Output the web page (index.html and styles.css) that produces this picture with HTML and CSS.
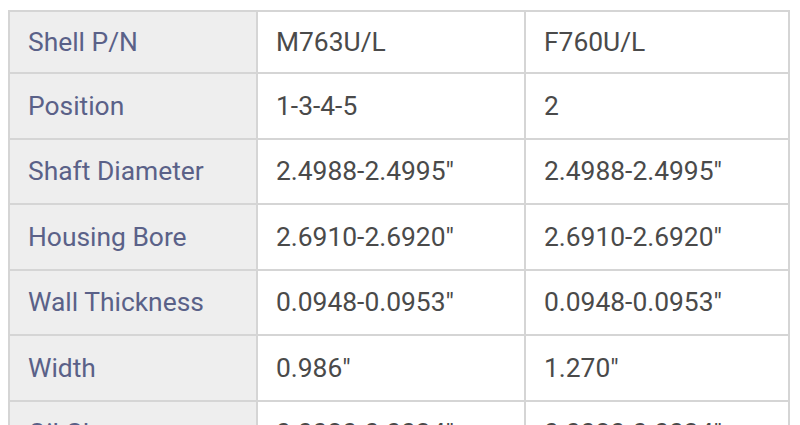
FILE: index.html
```html
<!DOCTYPE html>
<html>
<head>
<meta charset="utf-8">
<link rel="stylesheet" href="styles.css">
</head>
<body>
<table class="spec">
  <colgroup><col class="c1"><col class="c2"><col class="c3"></colgroup>
  <tr><th>Shell P/N</th><td>M763U/L</td><td>F760U/L</td></tr>
  <tr><th>Position</th><td>1-3-4-5</td><td>2</td></tr>
  <tr><th>Shaft Diameter</th><td>2.4988-2.4995"</td><td>2.4988-2.4995"</td></tr>
  <tr><th>Housing Bore</th><td>2.6910-2.6920"</td><td>2.6910-2.6920"</td></tr>
  <tr><th>Wall Thickness</th><td>0.0948-0.0953"</td><td>0.0948-0.0953"</td></tr>
  <tr><th>Width</th><td>0.986"</td><td>1.270"</td></tr>
  <tr><th>Oil Clearance</th><td>0.0020-0.0034"</td><td>0.0020-0.0034"</td></tr>
</table>
</body>
</html>
```
FILE: styles.css
```css
html, body { margin: 0; padding: 0; background: #fff; overflow: hidden; }
body { padding: 10px 0 0 8px; font-family: Roboto, "Liberation Sans", sans-serif; }
.spec { border-collapse: collapse; table-layout: fixed; width: 780px; }
.c1 { width: 248px; }
.c2 { width: 268px; }
.c3 { width: 264px; }
.spec th, .spec td {
  border: 2px solid #d5d5d5;
  height: 65.5px;
  padding: 0 0 0 18px;
  text-align: left;
  font-weight: 400;
  font-size: 26.4px;
  vertical-align: middle;
  box-sizing: border-box;
}
.spec tr:first-child th, .spec tr:first-child td { height: 62px; }
.spec th { background: #eeeeee; color: #5a6188; }
.spec td { background: #fff; color: #4a4a4a; }
```
